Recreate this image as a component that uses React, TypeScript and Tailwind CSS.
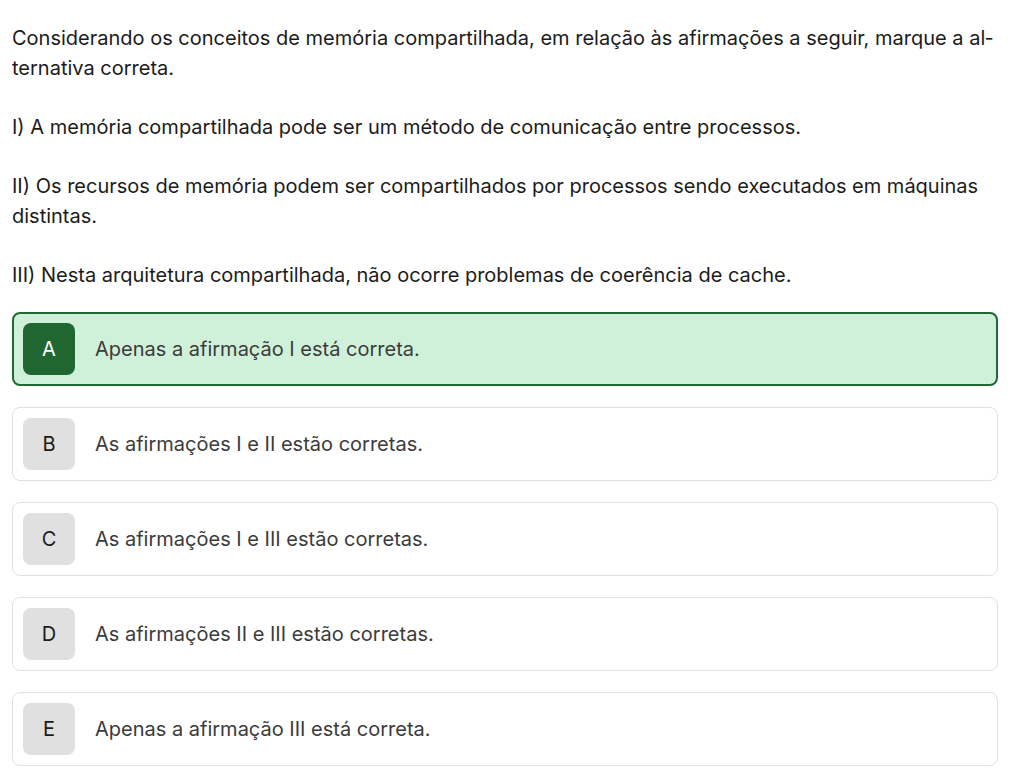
const options = [
  { letter: "A", text: "Apenas a afirmação I está correta.", selected: true },
  { letter: "B", text: "As afirmações I e II estão corretas." },
  { letter: "C", text: "As afirmações I e III estão corretas." },
  { letter: "D", text: "As afirmações II e III estão corretas." },
  { letter: "E", text: "Apenas a afirmação III está correta." },
];

export default function App() {
  return (
    <div className="min-h-screen bg-white px-3 pt-[23px] font-['Inter',sans-serif] text-[20px] leading-[30px] text-[#1b1b1b]">
      {/* Enunciado */}
      <div className="pr-[14px]">
        <p className="mb-[29px]">
          Considerando os conceitos de memória compartilhada, em relação às afirmações a seguir, marque a al{"\u00AD"}ternativa correta.
        </p>
        <p className="mb-[29px]">I) A memória compartilhada pode ser um método de comunicação entre processos.</p>
        <p className="mb-[29px]">
          II) Os recursos de memória podem ser compartilhados por processos sendo executados em máquinas distintas.
        </p>
        <p>III) Nesta arquitetura compartilhada, não ocorre problemas de coerência de cache.</p>
      </div>

      {/* Alternativas */}
      <div className="mt-[22px] mr-[14px] flex flex-col gap-[21px]">
        {options.map((o) => (
          <div
            key={o.letter}
            className={
              o.selected
                ? "flex items-center gap-5 rounded-lg border-2 border-[#1f6a31] bg-[#d0f1d9] p-[9px]"
                : "flex items-center gap-5 rounded-lg border border-[#e1e1e1] bg-white p-[10px]"
            }
          >
            <div
              className={
                o.selected
                  ? "flex h-[52px] w-[52px] shrink-0 items-center justify-center rounded-lg bg-[#1f6631] text-white"
                  : "flex h-[52px] w-[52px] shrink-0 items-center justify-center rounded-lg bg-[#e0e0e0] text-[#1b1b1b]"
              }
            >
              {o.letter}
            </div>
            <span className="text-[#3b3b3b]">{o.text}</span>
          </div>
        ))}
      </div>
    </div>
  );
}
